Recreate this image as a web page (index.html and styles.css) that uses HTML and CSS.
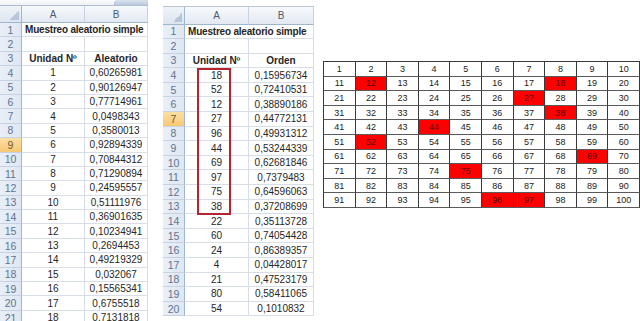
FILE: index.html
```html
<!DOCTYPE html>
<html lang="es">
<head>
<meta charset="utf-8">
<title>Muestreo aleatorio simple</title>
<link rel="stylesheet" href="styles.css">
</head>
<body>
<main class="page">
  <section class="sheet sheet-left">
    <div class="ribbon"><span class="ribbon-space"></span><span class="ribbon-tab"></span></div>
    <div class="cells">
      <div class="corner"></div><div class="colhead">A</div><div class="colhead">B</div>
      <div class="rowhead">1</div><div class="title">Muestreo aleatorio simple</div>
      <div class="rowhead">2</div><div class="c"></div><div class="c"></div>
      <div class="rowhead">3</div><div class="c b">Unidad Nº</div><div class="c b">Aleatorio</div>
      <div class="rowhead">4</div><div class="c">1</div><div class="c">0,60265981</div>
      <div class="rowhead">5</div><div class="c">2</div><div class="c">0,90126947</div>
      <div class="rowhead">6</div><div class="c">3</div><div class="c">0,77714961</div>
      <div class="rowhead">7</div><div class="c">4</div><div class="c">0,0498343</div>
      <div class="rowhead">8</div><div class="c">5</div><div class="c">0,3580013</div>
      <div class="rowhead sel">9</div><div class="c">6</div><div class="c">0,92894339</div>
      <div class="rowhead">10</div><div class="c">7</div><div class="c">0,70844312</div>
      <div class="rowhead">11</div><div class="c">8</div><div class="c">0,71290894</div>
      <div class="rowhead">12</div><div class="c">9</div><div class="c">0,24595557</div>
      <div class="rowhead">13</div><div class="c">10</div><div class="c">0,51111976</div>
      <div class="rowhead">14</div><div class="c">11</div><div class="c">0,36901635</div>
      <div class="rowhead">15</div><div class="c">12</div><div class="c">0,10234941</div>
      <div class="rowhead">16</div><div class="c">13</div><div class="c">0,2694453</div>
      <div class="rowhead">17</div><div class="c">14</div><div class="c">0,49219329</div>
      <div class="rowhead">18</div><div class="c">15</div><div class="c">0,032067</div>
      <div class="rowhead">19</div><div class="c">16</div><div class="c">0,15565341</div>
      <div class="rowhead">20</div><div class="c">17</div><div class="c">0,6755518</div>
      <div class="rowhead">21</div><div class="c">18</div><div class="c">0,7131818</div>
    </div>
  </section>

  <section class="sheet sheet-mid">
    <div class="ribbon ribbon-plain"></div>
    <div class="cells">
      <div class="corner"></div><div class="colhead">A</div><div class="colhead">B</div>
      <div class="rowhead">1</div><div class="title">Muestreo aleatorio simple</div>
      <div class="rowhead">2</div><div class="c"></div><div class="c"></div>
      <div class="rowhead">3</div><div class="c b">Unidad Nº</div><div class="c b">Orden</div>
      <div class="rowhead">4</div><div class="c">18</div><div class="c">0,15956734</div>
      <div class="rowhead">5</div><div class="c">52</div><div class="c">0,72410531</div>
      <div class="rowhead">6</div><div class="c">12</div><div class="c">0,38890186</div>
      <div class="rowhead sel">7</div><div class="c">27</div><div class="c">0,44772131</div>
      <div class="rowhead">8</div><div class="c">96</div><div class="c">0,49931312</div>
      <div class="rowhead">9</div><div class="c">44</div><div class="c">0,53244339</div>
      <div class="rowhead">10</div><div class="c">69</div><div class="c">0,62681846</div>
      <div class="rowhead">11</div><div class="c">97</div><div class="c">0,7379483</div>
      <div class="rowhead">12</div><div class="c">75</div><div class="c">0,64596063</div>
      <div class="rowhead">13</div><div class="c">38</div><div class="c">0,37208699</div>
      <div class="rowhead">14</div><div class="c">22</div><div class="c">0,35113728</div>
      <div class="rowhead">15</div><div class="c">60</div><div class="c">0,74054428</div>
      <div class="rowhead">16</div><div class="c">24</div><div class="c">0,86389357</div>
      <div class="rowhead">17</div><div class="c">4</div><div class="c">0,04428017</div>
      <div class="rowhead">18</div><div class="c">21</div><div class="c">0,47523179</div>
      <div class="rowhead">19</div><div class="c">80</div><div class="c">0,58411065</div>
      <div class="rowhead">20</div><div class="c">54</div><div class="c">0,1010832</div>
    </div>
    <div class="pick-box"></div>
  </section>

  <section class="board">
    <div class="n">1</div><div class="n">2</div><div class="n">3</div><div class="n">4</div><div class="n">5</div><div class="n">6</div><div class="n">7</div><div class="n">8</div><div class="n">9</div><div class="n">10</div>
    <div class="n">11</div><div class="n hit">12</div><div class="n">13</div><div class="n">14</div><div class="n">15</div><div class="n">16</div><div class="n">17</div><div class="n hit">18</div><div class="n">19</div><div class="n">20</div>
    <div class="n">21</div><div class="n">22</div><div class="n">23</div><div class="n">24</div><div class="n">25</div><div class="n">26</div><div class="n hit">27</div><div class="n">28</div><div class="n">29</div><div class="n">30</div>
    <div class="n">31</div><div class="n">32</div><div class="n">33</div><div class="n">34</div><div class="n">35</div><div class="n">36</div><div class="n">37</div><div class="n hit">38</div><div class="n">39</div><div class="n">40</div>
    <div class="n">41</div><div class="n">42</div><div class="n">43</div><div class="n hit">44</div><div class="n">45</div><div class="n">46</div><div class="n">47</div><div class="n">48</div><div class="n">49</div><div class="n">50</div>
    <div class="n">51</div><div class="n hit">52</div><div class="n">53</div><div class="n">54</div><div class="n">55</div><div class="n">56</div><div class="n">57</div><div class="n">58</div><div class="n">59</div><div class="n">60</div>
    <div class="n">61</div><div class="n">62</div><div class="n">63</div><div class="n">64</div><div class="n">65</div><div class="n">66</div><div class="n">67</div><div class="n">68</div><div class="n hit">69</div><div class="n">70</div>
    <div class="n">71</div><div class="n">72</div><div class="n">73</div><div class="n">74</div><div class="n hit">75</div><div class="n">76</div><div class="n">77</div><div class="n">78</div><div class="n">79</div><div class="n">80</div>
    <div class="n">81</div><div class="n">82</div><div class="n">83</div><div class="n">84</div><div class="n">85</div><div class="n">86</div><div class="n">87</div><div class="n">88</div><div class="n">89</div><div class="n">90</div>
    <div class="n">91</div><div class="n">92</div><div class="n">93</div><div class="n">94</div><div class="n">95</div><div class="n hit">96</div><div class="n hit">97</div><div class="n">98</div><div class="n">99</div><div class="n">100</div>
  </section>
</main>
</body>
</html>
```

FILE: styles.css
```css
* { box-sizing: border-box; }

html, body {
  margin: 0;
  padding: 0;
  background: #ffffff;
}

body {
  width: 640px;
  height: 321px;
  overflow: hidden;
  font-family: "Liberation Sans", Arial, sans-serif;
  font-size: 10px;
  color: #262626;
}

.page {
  display: flex;
  align-items: flex-start;
  height: 321px;
  overflow: hidden;
}

/* ---------- spreadsheets ---------- */
.sheet {
  position: relative;
  flex: none;
}

.sheet-left {
  width: 148px;
  --rh: 14.4px;
}

.sheet-mid {
  width: 151px;
  margin-left: 15px;
  --rh: 14.6px;
}

.ribbon {
  display: flex;
  height: 6px;
  background: linear-gradient(#fbfbfc, #eef1f5);
  border-bottom: 1px solid #aebdd0;
}

.ribbon-space { flex: 1; }

.ribbon-tab {
  width: 34px;
  background: linear-gradient(#d9e3ef, #b9c9dc);
  border-left: 1px solid #b3c2d6;
  border-top-left-radius: 4px;
}

.ribbon-plain {
  height: 7px;
  background: #ffffff;
  border-bottom: 1px solid #bcc7d5;
}

.cells {
  display: grid;
  grid-template-columns: 22px 63px 63px;
  grid-template-rows: 17px;
  grid-auto-rows: var(--rh);
}

.sheet-mid .cells {
  grid-template-columns: 22px 64px 65px;
  grid-template-rows: 17.5px;
}

.corner {
  background:
    linear-gradient(135deg, transparent 55%, #b7c6d9 55%) no-repeat right 2px bottom 2px / 10px 10px,
    linear-gradient(#f0f3f8, #dde5ef);
  border-right: 1px solid #9eb6ce;
  border-bottom: 1px solid #9eb6ce;
}

.colhead {
  display: flex;
  align-items: center;
  justify-content: center;
  background: linear-gradient(#f7f9fc, #e3e9f2);
  border-right: 1px solid #c6d2e1;
  border-bottom: 1px solid #9eb6ce;
  color: #4a5a6f;
  font-size: 10px;
}

.rowhead {
  display: flex;
  align-items: center;
  justify-content: center;
  background: linear-gradient(90deg, #e9eff7, #dfe7f2);
  border-right: 1px solid #9eb6ce;
  border-bottom: 1px solid #c6d2e1;
  color: #5f7391;
  font-size: 10.5px;
}

.rowhead.sel {
  background: linear-gradient(#fcdfa5, #f7c874);
  color: #6b5a35;
}

.c {
  display: flex;
  align-items: center;
  justify-content: center;
  border-right: 1px solid #d7dee9;
  border-bottom: 1px solid #d7dee9;
  white-space: nowrap;
  overflow: hidden;
}

.c.b { font-weight: bold; }

.title {
  grid-column: span 2;
  display: flex;
  align-items: center;
  padding-left: 3px;
  font-weight: bold;
  letter-spacing: -0.2px;
  white-space: nowrap;
  border-right: 1px solid #d7dee9;
  border-bottom: 1px solid #d7dee9;
}

.pick-box {
  position: absolute;
  left: 34px;
  top: 68px;
  width: 34px;
  height: 147px;
  border: 2px solid #b3262f;
}

/* ---------- 1..100 board ---------- */
.board {
  flex: none;
  width: 317px;
  margin-left: 9px;
  margin-top: 61px;
  display: grid;
  grid-template-columns: repeat(10, 1fr);
  grid-auto-rows: 14.6px;
  border-top: 1px solid #3a3a3a;
  border-left: 1px solid #3a3a3a;
}

.n {
  display: flex;
  align-items: center;
  justify-content: center;
  border-right: 1px solid #3a3a3a;
  border-bottom: 1px solid #5a5a5a;
  font-size: 9px;
  color: #1a1a1a;
}

.n.hit {
  background: #ff0000;
  color: #5c0000;
}
```
